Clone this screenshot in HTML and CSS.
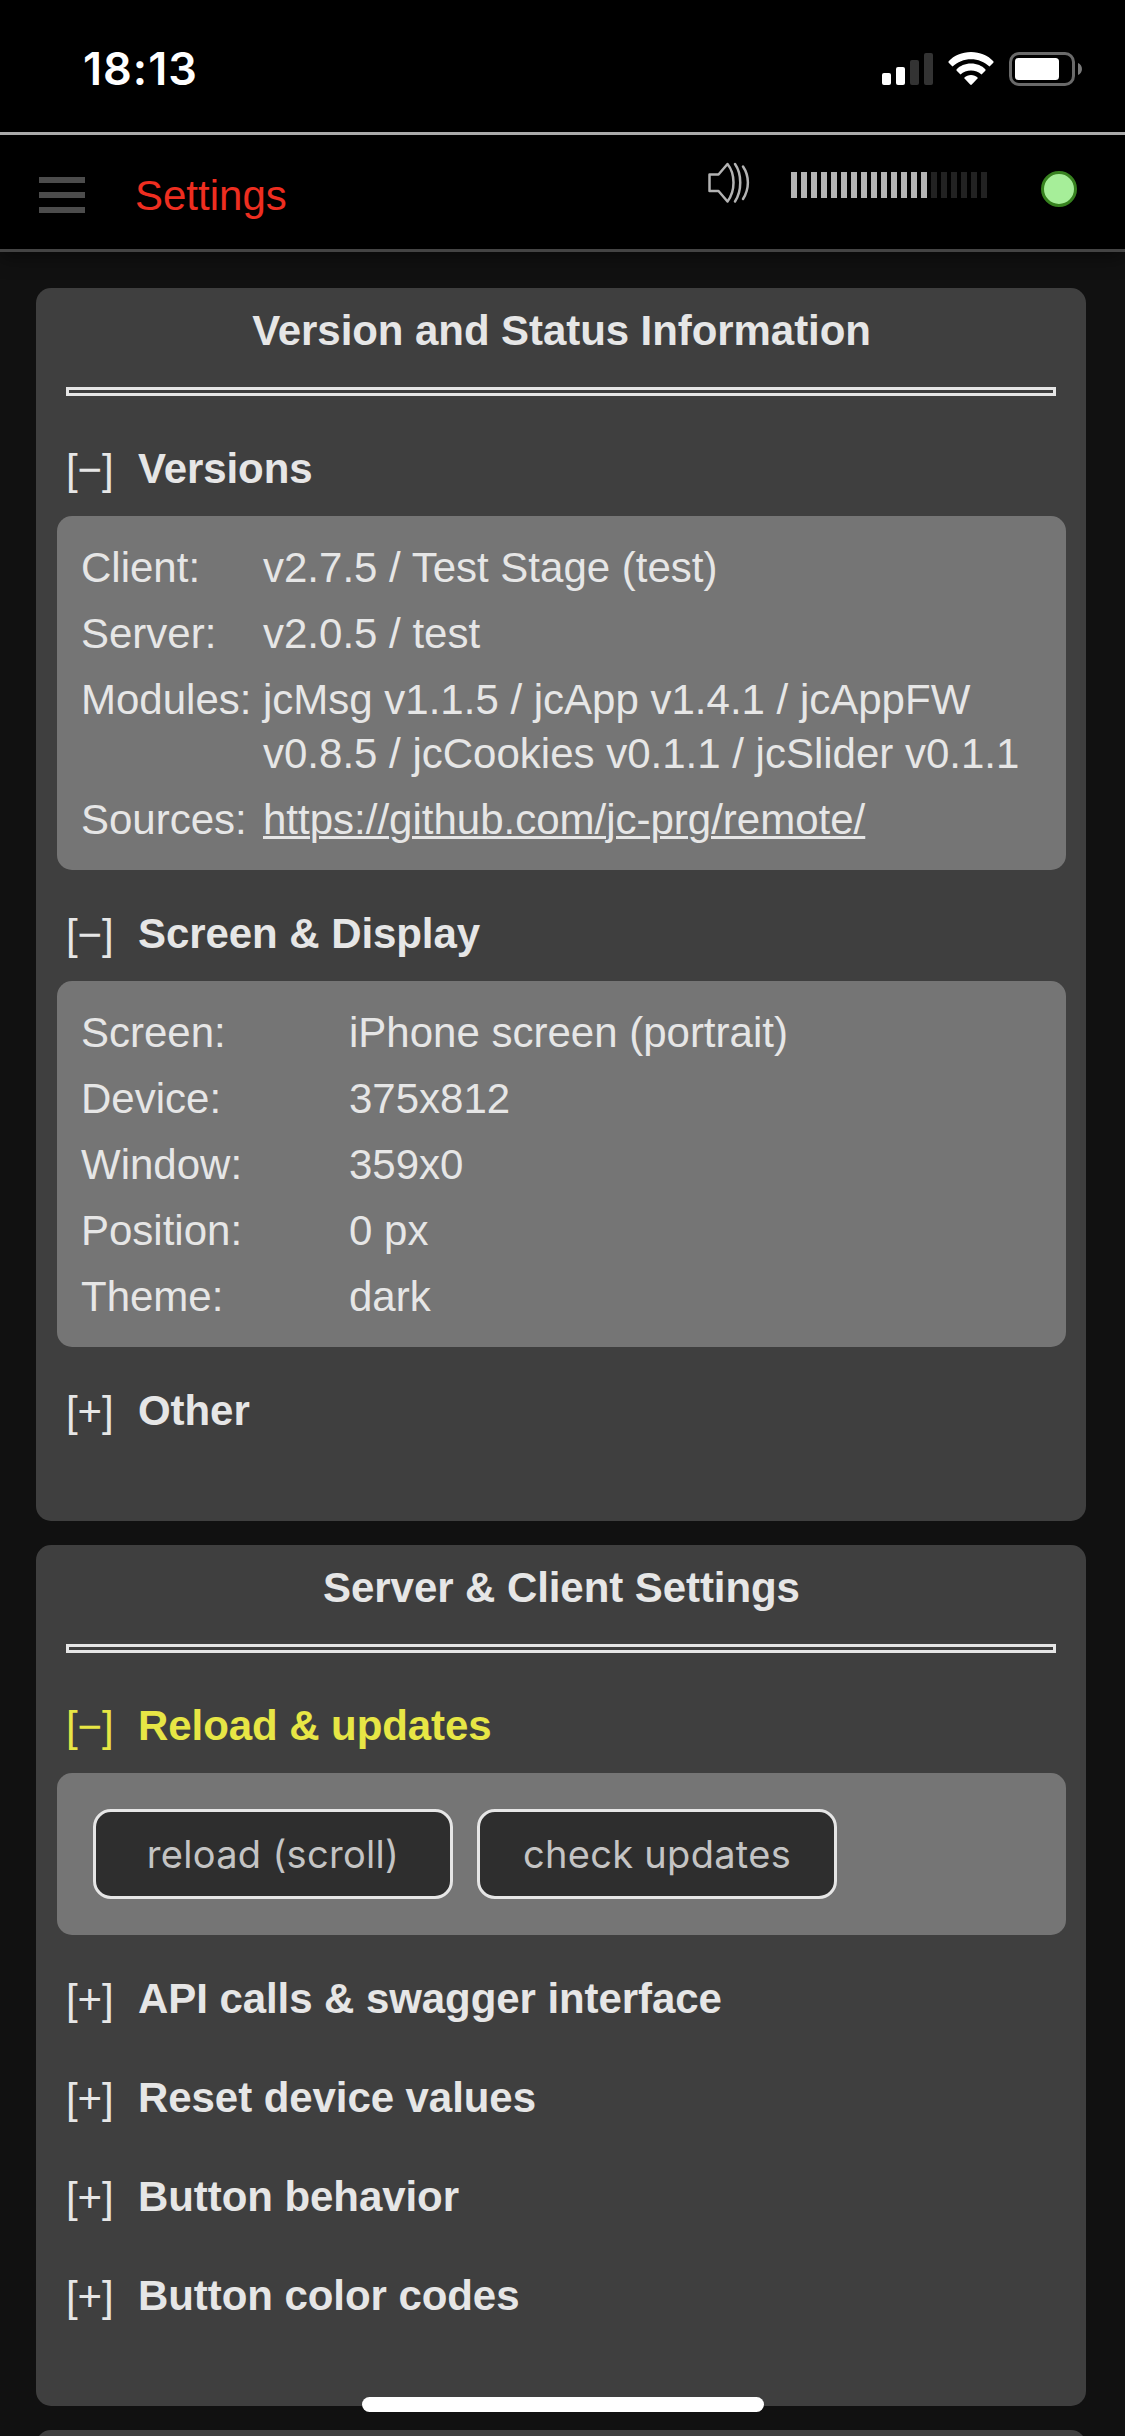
FILE: index.html
```html
<!DOCTYPE html>
<html lang="en">
<head>
<meta charset="utf-8">
<title>Settings</title>
<link rel="stylesheet" href="styles.css">
</head>
<body>
<div class="statusbar">
  <span class="clock">18:13</span>
  <div class="indicators">
    <svg class="signal" width="51" height="32" viewBox="0 0 51 32"><g fill="#fff"><rect x="0" y="20" width="9" height="12" rx="2"/><rect x="14" y="14" width="9" height="18" rx="2"/></g><g fill="#333"><rect x="28" y="7" width="9" height="25" rx="2"/><rect x="42" y="0" width="9" height="32" rx="2"/></g></svg>
    <svg class="wifi" width="46" height="33" viewBox="0 0 46 33" fill="#fff"><path d="M23 0C32 0 40 3.500 45.300 9.200Q46 10 45.300 10.800L41.500 14.500C36.500 9.800 30 7.200 23 7.200S9.500 9.800 4.500 14.500L.7 10.800Q0 10 .7 9.200C6 3.500 14 0 23 0Z"/><path d="M23 11.500C29 11.500 34 13.800 37.300 17.200Q38 18 37.300 18.800L33.500 22.500C30.700 20 27 18.500 23 18.500S15.300 20 12.500 22.500L8.700 18.800Q8 18 8.700 17.200C12 13.800 17 11.500 23 11.500Z"/><path d="M23 23C25.500 23 28 24 29.500 25.400Q30 26 29.500 26.600L23.800 32.500Q23 33.300 22.200 32.500L16.500 26.600Q16 26 16.500 25.400C18 24 20.500 23 23 23Z"/></svg>
    <svg class="battery" width="73" height="34" viewBox="0 0 73 34"><rect x="1.500" y="1.500" width="63" height="31" rx="8.500" fill="none" stroke="#6a6a6a" stroke-width="3"/><rect x="6" y="6" width="44" height="22" rx="3.500" fill="#fff"/><path d="M69 11C74.300 13 74.300 21 69 23Z" fill="#7a7a7a"/></svg>
  </div>
</div>
<header class="appbar">
  <div class="menu"><i></i><i></i><i></i></div>
  <h1 class="page-title">Settings</h1>
  <svg class="speaker" width="42" height="42" viewBox="0 0 42 42" fill="none" stroke="#b3b3b3" stroke-width="2.500" stroke-linejoin="round" stroke-linecap="round"><path d="M1.500 12.500H10.500L19.500 2C27.500 12 27.500 29 19.500 39.500L10.500 29H1.500Z"/><path d="M27 2C34 12 34 29 27 39.500"/><path d="M35 4.500C41.500 14 41.500 27 35 37"/></svg>
  <div class="volume">
    <i class="on"></i><i class="on"></i><i class="on"></i><i class="on"></i><i class="on"></i><i class="on"></i><i class="on"></i><i class="on"></i><i class="on"></i><i class="on"></i><i class="on"></i><i class="on"></i><i class="on"></i><i class="on"></i><i></i><i></i><i></i><i></i><i></i><i></i>
  </div>
  <span class="online"></span>
</header>
<main class="content">
  <section class="panel">
    <h2 class="panel-title">Version and Status Information</h2>
    <div class="rule"></div>
    <h3 class="row"><span class="toggle">[−]</span>Versions</h3>
    <dl class="box info">
      <dt>Client:</dt><dd>v2.7.5 / Test Stage (test)</dd>
      <dt>Server:</dt><dd>v2.0.5 / test</dd>
      <dt>Modules:</dt><dd>jcMsg v1.1.5 / jcApp v1.4.1 / jcAppFW v0.8.5 / jcCookies v0.1.1 / jcSlider v0.1.1</dd>
      <dt>Sources:</dt><dd><a href="https://github.com/jc-prg/remote/">https://github.com/jc-prg/remote/</a></dd>
    </dl>
    <h3 class="row"><span class="toggle">[−]</span>Screen &amp; Display</h3>
    <dl class="box info wide">
      <dt>Screen:</dt><dd>iPhone screen (portrait)</dd>
      <dt>Device:</dt><dd>375x812</dd>
      <dt>Window:</dt><dd>359x0</dd>
      <dt>Position:</dt><dd>0 px</dd>
      <dt>Theme:</dt><dd>dark</dd>
    </dl>
    <h3 class="row"><span class="toggle">[+]</span>Other</h3>
  </section>
  <section class="panel">
    <h2 class="panel-title">Server &amp; Client Settings</h2>
    <div class="rule"></div>
    <h3 class="row active"><span class="toggle">[−]</span>Reload &amp; updates</h3>
    <div class="box actions">
      <button class="button">reload (scroll)</button>
      <button class="button">check updates</button>
    </div>
    <h3 class="row"><span class="toggle">[+]</span>API calls &amp; swagger interface</h3>
    <h3 class="row"><span class="toggle">[+]</span>Reset device values</h3>
    <h3 class="row"><span class="toggle">[+]</span>Button behavior</h3>
    <h3 class="row"><span class="toggle">[+]</span>Button color codes</h3>
  </section>
  <section class="panel"></section>
</main>
<div class="home-indicator"></div>
</body>
</html>
```
FILE: styles.css
```css
* { box-sizing: border-box; }
body {
  margin: 0;
  height: 2436px;
  overflow: hidden;
  display: flex;
  flex-direction: column;
  background: #111;
  color: #e6e6e6;
  font: 42px/54px "Liberation Sans", Arial, sans-serif;
}
h1, h2, h3, dl, dd { margin: 0; font-size: inherit; }

.statusbar {
  flex: none;
  height: 132px;
  padding: 0 43px 0 83px;
  display: flex;
  justify-content: space-between;
  background: #000;
}
.clock {
  padding-top: 42px;
  font: 600 45px/54px Inter, sans-serif;
  letter-spacing: 1px;
  color: #fff;
}
.indicators { display: flex; align-items: flex-start; padding-top: 52px; }
.signal { margin: 1px 15px 0 0; }
.wifi { margin-right: 15px; }

.appbar {
  flex: none;
  height: 120px;
  padding: 0 48px 0 39px;
  display: flex;
  align-items: flex-start;
  background: #000;
  border-top: 3px solid #aaa;
  border-bottom: 3px solid #444;
  box-shadow: 0 6px 18px rgba(0, 0, 0, .4);
}
.menu { width: 46px; margin-top: 42px; display: grid; gap: 9px; }
.menu i { height: 6px; background: #4c4c4c; }
.page-title {
  flex: 1;
  margin: 34px 0 0 50px;
  font-weight: normal;
  color: #ee2e20;
}
.speaker { margin: 27px 41px 0 0; }
.volume { display: flex; gap: 4px; margin: 37px 54px 0 0; }
.volume i { width: 6px; height: 26px; background: #222; }
.volume .on { background: #b3b3b3; }
.online {
  width: 36px;
  height: 36px;
  margin-top: 36px;
  border: 3px solid #37821f;
  border-radius: 50%;
  background: #a6ee99;
}

.content {
  flex: none;
  padding: 36px 39px 0 36px;
  display: flex;
  flex-direction: column;
  gap: 24px;
}
.panel {
  padding: 16px 20px 63px 21px;
  border-radius: 15px;
  background: #3f3f3f;
}
.panel-title {
  text-align: center;
  font-weight: bold;
  letter-spacing: -.07px;
}
.rule {
  height: 9px;
  margin: 29px 10px 21px 9px;
  border: 3px solid #e6e6e6;
}
.row {
  height: 99px;
  padding: 25px 9px 0;
  display: flex;
  font-weight: bold;
  letter-spacing: -.07px;
}
.toggle { width: 72px; padding-top: 1px; font-weight: normal; }
.active { color: #e7e645; }
.box { border-radius: 15px; background: #757575; }
.box + .row { margin-top: 12px; }
.info {
  padding: 18px 24px;
  display: grid;
  grid-template-columns: 182px 1fr;
}
.wide { grid-template-columns: 268px 1fr; }
.info dt, .info dd { padding: 7px 0 5px; }
.info a { color: inherit; text-decoration-thickness: 3px; }
.actions { display: flex; gap: 24px; padding: 36px; }
.button {
  width: 360px;
  height: 90px;
  padding: 0;
  border: 3px solid #e6e6e6;
  border-radius: 18px;
  background: #2e2e2e;
  color: #c4c4c4;
  font: 38px/48px Inter, sans-serif;
  letter-spacing: .3px;
}
.home-indicator {
  position: fixed;
  left: 362px;
  top: 2397px;
  width: 402px;
  height: 15px;
  border-radius: 8px;
  background: #fff;
}
```
